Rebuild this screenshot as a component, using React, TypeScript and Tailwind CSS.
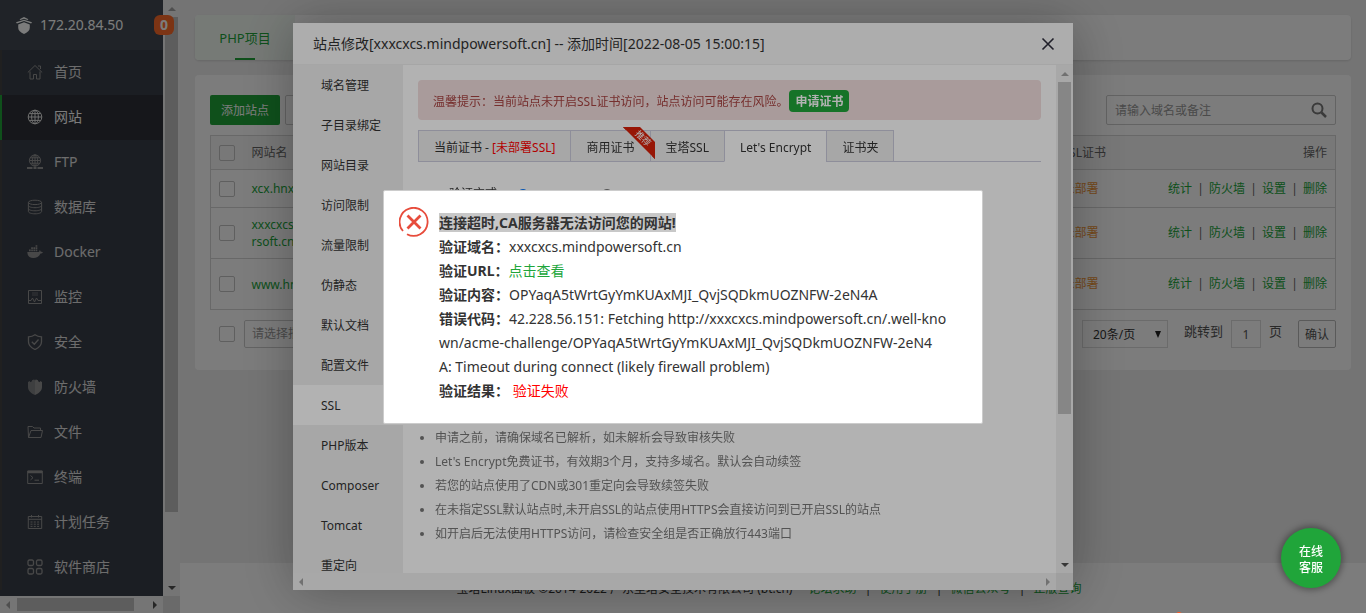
import { ReactNode } from "react";

const menu = [
  { name: "首页", icon: "home" },
  { name: "网站", icon: "globe" },
  { name: "FTP", icon: "ftp" },
  { name: "数据库", icon: "database" },
  { name: "Docker", icon: "docker" },
  { name: "监控", icon: "monitor" },
  { name: "安全", icon: "safe" },
  { name: "防火墙", icon: "firewall" },
  { name: "文件", icon: "folder" },
  { name: "终端", icon: "terminal" },
  { name: "计划任务", icon: "calendar" },
  { name: "软件商店", icon: "store" },
];

const icons: Record<string, ReactNode> = {
  home: (
    <>
      <path d="M.8 8.500 8 1.500l7.200 7M3 7.500v7.500h3.500v-4.500h3V15H13V7.500" />
      <path d="M11 2h2.500v3" />
    </>
  ),
  globe: (
    <>
      <circle cx="8" cy="8" r="6.800" />
      <ellipse cx="8" cy="8" rx="3.400" ry="6.800" />
      <path d="M8 1v14M1 8h14M2.200 4.600h11.600M2.200 11.400h11.600" />
    </>
  ),
  ftp: (
    <>
      <circle cx="8" cy="6.500" r="5.600" />
      <ellipse cx="8" cy="6.500" rx="2.700" ry="5.600" />
      <path d="M8 1v11M2.500 6.500h11M3.200 3.800h9.600M3.200 9.200h9.600" />
      <path d="M0 14h5.500M10.500 14H16M6.500 14h3" strokeWidth="2" />
    </>
  ),
  database: (
    <>
      <ellipse cx="8" cy="3.400" rx="6.600" ry="2.200" />
      <path d="M1.400 3.400v9.200c0 1.200 3 2.200 6.600 2.200s6.600-1 6.600-2.200V3.400M1.400 6.500c0 1.200 3 2.200 6.600 2.200s6.600-1 6.600-2.200M1.400 9.600c0 1.200 3 2.200 6.600 2.200s6.600-1 6.600-2.200" />
    </>
  ),
  docker: (
    <g fill="currentColor" stroke="none">
      <path d="M.3 8h11.200c.8-.1 1.200-.7 1-2 .8.500 1.200 1.100 1.200 1.800.8-.2 1.700 0 2.300.500-.5.900-1.400 1.200-2.500 1.200C12.300 12.300 9.800 14 6.300 14 2.500 14 .4 12 .3 8z" />
      <path d="M2 5.500h1.700v1.700H2zM4.200 5.500h1.700v1.700H4.200zM6.400 5.500h1.700v1.700H6.400zM8.600 5.500h1.700v1.700H8.600zM4.200 3.300h1.700V5H4.200zM6.400 3.300h1.700V5H6.400zM8.600 3.300h1.700V5H8.600zM8.600 1.200h1.700v1.600H8.600z" />
    </g>
  ),
  monitor: (
    <>
      <path d="M1.500 1.500h13v13h-13z" />
      <path d="M5 4h6M5 6h6" opacity=".6" />
      <path d="M2 11.500h2l1.500-2.500L7.500 13l2-4 1.500 2.500h3" />
    </>
  ),
  safe: (
    <path
      strokeWidth="1.300"
      d="M8 .8c2 1.500 4.300 2 6.500 2v5c0 3.500-2.500 6-6.500 7.700C4 13.800 1.500 11.300 1.500 7.800v-5C3.700 2.800 6 2.300 8 .8zM4.800 7.800l2.500 2.400L11.500 5.500"
    />
  ),
  firewall: (
    <g fill="currentColor" stroke="none">
      <path opacity=".8" d="M1 3l2-1v1.200l2-1V1.200l2-.7v1L8 .3V16c-4.500-2-7-4.500-7-8z" />
      <path d="M15 3l-2-1v1.200l-2-1V1.200L9 .5v1L8 .3V16c4.500-2 7-4.500 7-8z" />
    </g>
  ),
  folder: <path d="M1.500 13.500 1 2.500h4.500l1.500 1.500h6.500v2.500M1.500 13.500 4 6.500h11.500l-1.500 7z" />,
  terminal: (
    <>
      <path d="M.7 2h14.600v12.500H.7z" />
      <path d="M.7 3h14.600" strokeWidth="2.500" />
      <path d="M3.500 6.500 6 8.700l-2.500 2.200M7.500 11.200H12" />
    </>
  ),
  calendar: (
    <>
      <path d="M1.300 2.500h13.400v12H1.300zM1.300 5.300h13.400M4.500 1v2.500M11.500 1v2.500" />
      <path d="M3.500 8h9M3.500 10.200h9M3.500 12.400h9" strokeDasharray="2 1.300" />
    </>
  ),
  store: (
    <g strokeWidth="1.300">
      <rect x="1" y="1" width="5.500" height="5.500" rx="1.500" />
      <rect x="9.500" y="1" width="5.500" height="5.500" rx="1.500" />
      <rect x="1" y="9.500" width="5.500" height="5.500" rx="1.500" />
      <rect x="9.500" y="9.500" width="5.500" height="5.500" rx="1.500" />
    </g>
  ),
};

const sites = [
  { name: "xcx.hnxxx.cn", height: "h-[38px]" },
  { name: "xxxcxcs.mindpowersoft.cn", height: "h-[51px]" },
  { name: "www.hnxxx.cn", height: "h-[51px]" },
];

const siteTabs = [
  "域名管理",
  "子目录绑定",
  "网站目录",
  "访问限制",
  "流量限制",
  "伪静态",
  "默认文档",
  "配置文件",
  "SSL",
  "PHP版本",
  "Composer",
  "Tomcat",
  "重定向",
];

const tips = [
  "申请之前，请确保域名已解析，如未解析会导致审核失败",
  "Let's Encrypt免费证书，有效期3个月，支持多域名。默认会自动续签",
  "若您的站点使用了CDN或301重定向会导致续签失败",
  "在未指定SSL默认站点时,未开启SSL的站点使用HTTPS会直接访问到已开启SSL的站点",
  "如开启后无法使用HTTPS访问，请检查安全组是否正确放行443端口",
];

function Arrow({ d, dark }: { d: string; dark?: boolean }) {
  return (
    <svg viewBox="0 0 17 17" className={`size-[17px] shrink-0 ${dark ? "text-[#505050]" : "text-[#a3a3a3]"}`}>
      <path d={d} fill="currentColor" />
    </svg>
  );
}

function VScroll({ thumb }: { thumb: string }) {
  return (
    <div className="flex w-[17px] shrink-0 flex-col items-center bg-[#f1f1f1]">
      <Arrow d="M5 11h8L9 7z" />
      <div className="flex w-full min-h-0 flex-1 flex-col items-center">
        <div className={`w-[13px] bg-[#c1c1c1] ${thumb}`} />
      </div>
      <Arrow d="M5 7h8l-4 4z" dark />
    </div>
  );
}

function HScroll({ thumb, dark }: { thumb: string; dark?: boolean }) {
  return (
    <div className="flex h-[17px] min-w-0 flex-1 items-center bg-[#f1f1f1]">
      <Arrow d="M10 5v8L6 9z" />
      <div className="flex h-[13px] min-w-0 flex-1">
        <div className={`bg-[#c1c1c1] ${thumb}`} />
      </div>
      <Arrow d="M7 5v8l4-4z" dark={dark} />
    </div>
  );
}

function Sidebar() {
  return (
    <aside className="relative flex w-[180px] shrink-0 flex-col">
      <div className="flex min-h-0 flex-1">
        <div className="flex-1 overflow-hidden bg-[#393f49]">
          <div className="flex h-[50px] items-center gap-2 bg-[#424a53] pl-4 text-sm text-white">
            <svg viewBox="0 0 18 20" className="h-5 w-4" fill="currentColor">
              <path d="M4 3.500 9 1l5 2.500-1 1L9 3 5 4.500zM0 7l9-3 9 3-1 1.200L9 5.500 1 8.200z" />
              <path d="M2.500 9.500 9 7l6.500 2.500V13c0 3-2.500 5.500-6.500 7-4-1.500-6.500-4-6.500-7z" />
            </svg>
            172.20.84.50
          </div>
          <nav>
            {menu.map((m) => (
              <a
                key={m.name}
                href="#"
                className={`flex h-[45px] items-center gap-[11px] border-l-2 pb-[2px] pl-[25px] text-sm ${
                  m.name === "网站" ? "border-[#20a53a] bg-[#2f3238] text-white" : "border-[#444] text-[#e0e0e0]"
                }`}
              >
                <svg
                  viewBox="0 0 16 16"
                  fill="none"
                  stroke="currentColor"
                  className={`size-4 ${m.name === "网站" ? "text-[#e4e4e4]" : "text-[#959595]"}`}
                >
                  {icons[m.icon]}
                </svg>
                {m.name}
              </a>
            ))}
          </nav>
        </div>
        <VScroll thumb="h-[88%]" />
      </div>
      <div className="flex bg-[#dcdcdc] pr-[17px]">
        <HScroll thumb="w-[91%]" dark />
      </div>
      <span className="absolute top-[15px] right-[6px] flex size-5 items-center justify-center rounded-md bg-[#ff6c2c] text-sm font-bold text-white">
        0
      </span>
    </aside>
  );
}

function Box({ label }: { label: string }) {
  return (
    <input type="checkbox" aria-label={label} className="block size-4 appearance-none rounded-xs border border-[#c4c4c4]" />
  );
}

function SiteTable() {
  return (
    <table className="w-full border-collapse border border-[#d6d6d6] text-xs text-[#666]">
      <thead>
        <tr className="h-[34px] border-b border-[#d6d6d6] bg-[#f6f6f6] text-left">
          <th className="w-8 pl-2">
            <Box label="全选" />
          </th>
          <th className="pl-[9px] font-normal">网站名</th>
          <th className="w-24 font-normal">SSL证书</th>
          <th className="w-[177px] pr-2 text-right font-normal">操作</th>
        </tr>
      </thead>
      <tbody>
        {sites.map((s) => (
          <tr key={s.name} className={`border-b border-[#d6d6d6] ${s.height}`}>
            <td className="pl-2">
              <Box label={s.name} />
            </td>
            <td className="pl-[9px]">
              <a href="#" className="block w-[108px] leading-[17px] break-all text-[#20a53a]">
                {s.name}
              </a>
            </td>
            <td>
              <a href="#" className="text-[#f0973a]">未部署</a>
            </td>
            <td className="pr-2 text-right whitespace-nowrap">
              {["统计", "防火墙", "设置", "删除"].map((a, i) => (
                <span key={a}>
                  {i > 0 && <span className="inline-block w-[17px] text-center">|</span>}
                  <a href="#" className="text-[#20a53a]">{a}</a>
                </span>
              ))}
            </td>
          </tr>
        ))}
      </tbody>
    </table>
  );
}

function Page() {
  return (
    <main className="flex min-w-0 flex-1 flex-col bg-[#f0f0f0]">
      <div className="m-[15px] flex h-[45px] shrink-0 overflow-hidden rounded bg-white shadow-sm">
        <a href="#" className="flex w-[100px] flex-col items-center justify-end bg-[#f3fbf4] text-[13px] text-[#20a53a]">
          <span className="mb-[10px] leading-5">PHP项目</span>
          <span className="h-[2px] w-5 bg-[#20a53a]" />
        </a>
      </div>
      <section className="mx-[15px] rounded bg-white px-[15px] pt-5 pb-[22px] text-xs">
        <div className="mb-[10px] flex h-[30px] gap-[5px]">
          <button className="w-[70px] rounded-xs bg-[#20a53a] pt-[2px] text-white">添加站点</button>
          <button className="w-[90px] rounded-xs border border-[#ccc]" aria-label="修改默认页" />
          <div className="ml-auto flex w-[230px] items-center rounded-xs border border-[#ccc] pr-2">
            <input
              aria-label="搜索"
              placeholder="请输入域名或备注"
              className="min-w-0 flex-1 pt-[2px] pl-2 outline-none placeholder:text-[#999]"
            />
            <svg viewBox="0 0 16 16" className="size-4" fill="none" stroke="#777" strokeWidth="2">
              <circle cx="6.500" cy="6.500" r="5" />
              <path d="m10.500 10.500 4.500 4.500" strokeWidth="2.500" />
            </svg>
          </div>
        </div>
        <SiteTable />
        <div className="mt-[10px] flex h-7 items-center text-[#555]">
          <div className="mr-[9px] ml-[9px]">
            <Box label="选择全部" />
          </div>
          <select
            aria-label="批量操作"
            className="h-7 w-[130px] appearance-none rounded-xs border border-[#ccc] pl-[7px] text-[#999]"
          >
            <option>请选择批量操作</option>
          </select>
          <div className="relative ml-auto">
            <select
              aria-label="每页条数"
              className="h-7 w-[86px] appearance-none border border-[#ddd] pt-px pl-[10px] text-[#333]"
            >
              <option>20条/页</option>
            </select>
            <svg viewBox="0 0 8 7" className="pointer-events-none absolute top-[11px] right-[6px] h-[7px] w-2">
              <path d="M1 0h6L4 7z" fill="#222" />
            </svg>
          </div>
          <label htmlFor="page" className="mr-2 ml-4 pb-1 text-[13px]">跳转到</label>
          <input id="page" defaultValue="1" className="h-7 w-[30px] border border-[#ddd] text-center text-[#555]" />
          <span className="mr-4 ml-2 pb-1 text-[13px]">页</span>
          <button className="h-7 w-[38px] rounded-xs border border-[#bbb] pt-[2px]">确认</button>
        </div>
      </section>
      <footer className="mt-auto flex h-[50px] items-center justify-center bg-white pt-[2px] pr-2 text-xs text-[#333]">
        宝塔Linux面板 ©2014-2022 广东堡塔安全技术有限公司 (bt.cn)
        {["论坛求助", "使用手册", "微信公众号", "正版查询"].map((l, i) => (
          <span key={l} className="flex">
            <span className={i > 0 ? "w-[23px] text-center" : "w-4"}>{i > 0 && "|"}</span>
            <a href="#" className="text-[#20a53a]">{l}</a>
          </span>
        ))}
      </footer>
    </main>
  );
}

function Ribbon() {
  return (
    <svg viewBox="0 0 32 32" className="absolute -top-1 -right-[5px] z-10 size-8">
      <path d="M0 0h6v3H3zM32 32v-6h-3v3z" fill="#8f1204" />
      <path d="M0 0h17l15 15v17z" fill="#d8200a" />
      <text x="20" y="14.500" fontSize="9" fill="#fff" textAnchor="middle" transform="rotate(45 20 11.500)">
        推荐
      </text>
    </svg>
  );
}

function SiteModal() {
  const tab = "relative flex items-center border border-[#ccccdd] px-[15px] pt-[3px]";
  return (
    <div className="fixed inset-0 flex items-center justify-center bg-black/30">
      <div className="flex h-[calc(100vh-46px)] w-[780px] flex-col bg-white shadow-[1px_1px_50px_rgba(0,0,0,0.3)]">
        <div className="flex h-[42px] shrink-0 items-center justify-between border-b border-[#eee] bg-[#f8f8f8] pr-[18px] pl-5 text-sm text-[#333]">
          站点修改[xxxcxcs.mindpowersoft.cn] -- 添加时间[2022-08-05 15:00:15]
          <button aria-label="关闭">
            <svg viewBox="0 0 14 14" className="size-[14px]" stroke="#2e2d3c" strokeWidth="1.600">
              <path d="m1.500 1.500 11 11m0-11-11 11" />
            </svg>
          </button>
        </div>
        <div className="flex min-h-0 flex-1">
          <nav className="w-[110px] shrink-0 overflow-hidden bg-[#f0f0f0] text-xs text-[#333]">
            {siteTabs.map((t) => (
              <a key={t} href="#" className={`flex h-10 items-center pt-[2px] pl-7 ${t === "SSL" ? "bg-white" : ""}`}>
                {t}
              </a>
            ))}
          </nav>
          <div className="flex min-w-0 flex-1 flex-col overflow-hidden p-[15px] text-xs text-[#333]">
            <div className="flex h-10 shrink-0 items-center gap-px rounded bg-[#f2dede] px-[15px] pt-[2px] text-[#a94442]">
              <span className="pt-[2px]">温馨提示：当前站点未开启SSL证书访问，站点访问可能存在风险。</span>
              <button className="h-[22px] rounded-sm bg-[#20a53a] px-[6px] pt-px font-bold text-white">申请证书</button>
            </div>
            <div className="mt-[10px] flex h-8 shrink-0">
              <div className={`${tab} bg-[#f0f0f0]`}>
                <span>当前证书 - <span className="text-[red]">[未部署SSL]</span></span>
              </div>
              <div className={`${tab} -ml-px bg-[#f0f0f0]`}>
                商用证书
                <Ribbon />
              </div>
              <div className={`${tab} -ml-px bg-[#f0f0f0]`}>宝塔SSL</div>
              <div className={`${tab} -ml-px border-b-white`}>Let's Encrypt</div>
              <div className={`${tab} -ml-px bg-[#f0f0f0]`}>证书夹</div>
              <div className="flex-1 border-b border-[#ccccdd]" />
            </div>
            <div className="mt-5 ml-[31px] flex gap-5">
              <span className="leading-6">验证方式</span>
              <label className="flex items-start gap-1 pt-[7px]">
                <input type="radio" name="verify" defaultChecked className="size-3" />
                文件验证
              </label>
              <label className="flex items-start gap-1 pt-[7px]">
                <input type="radio" name="verify" className="size-3" />
                DNS验证
              </label>
            </div>
            <ul className="mt-auto mb-3 list-disc pl-[17px] leading-6 text-[#777]">
              {tips.map((t) => (
                <li key={t}>{t}</li>
              ))}
            </ul>
          </div>
          <VScroll thumb="h-[70%]" />
        </div>
        <div className="flex bg-[#e4e4e4] pr-[17px]">
          <HScroll thumb="w-0" />
        </div>
      </div>
    </div>
  );
}

function ErrorDialog() {
  return (
    <div className="fixed inset-0 flex items-center justify-center bg-black/30">
      <div className="relative w-[600px] rounded-xs border border-[#ccc] bg-white py-5 pr-[25px] pl-[55px] text-sm leading-6 break-all text-[#333]">
        <svg viewBox="0 0 30 30" className="absolute top-4 left-[15px] size-[30px]" fill="none" stroke="#e74c3c">
          <path d="M4 24A14 14 0 1 1 8 27.200" strokeWidth="1.800" />
          <path d="m8.500 8.500 13 13m0-13-13 13" strokeWidth="2.800" />
        </svg>
        <p>
          <b className="bg-[#c8c8c8]">连接超时,CA服务器无法访问您的网站!</b>
        </p>
        <p><b>验证域名：</b>xxxcxcs.mindpowersoft.cn</p>
        <p>
          <b>验证URL：</b>
          <a href="#" className="text-[#20a53a]">点击查看</a>
        </p>
        <p><b>验证内容：</b>OPYaqA5tWrtGyYmKUAxMJI_QvjSQDkmUOZNFW-2eN4A</p>
        <p>
          <b>错误代码：</b>42.228.56.151: Fetching http://xxxcxcs.mindpowersoft.cn/.well-kno
          <br />
          wn/acme-challenge/OPYaqA5tWrtGyYmKUAxMJI_QvjSQDkmUOZNFW-2eN4
          <br />
          A: Timeout during connect (likely firewall problem)
        </p>
        <p>
          <b>验证结果：</b> <span className="text-[red]">验证失败</span>
        </p>
      </div>
    </div>
  );
}

export default function App() {
  return (
    <div className="flex h-screen overflow-hidden font-['Noto_Sans','Noto_Sans_CJK_SC',sans-serif]">
      <Sidebar />
      <Page />
      <SiteModal />
      <ErrorDialog />
      <button className="fixed right-[25px] bottom-[25px] flex size-[60px] items-center justify-center rounded-full bg-[#20a53a] px-4 pt-1 text-xs leading-4 font-medium text-white shadow-[0_0_6px_2px_rgba(0,0,0,0.35)]">
        在线 客服
      </button>
      <span className="fixed right-[184px] -bottom-[5px] size-[6px] rounded-full bg-[#ff5722]" />
    </div>
  );
}
